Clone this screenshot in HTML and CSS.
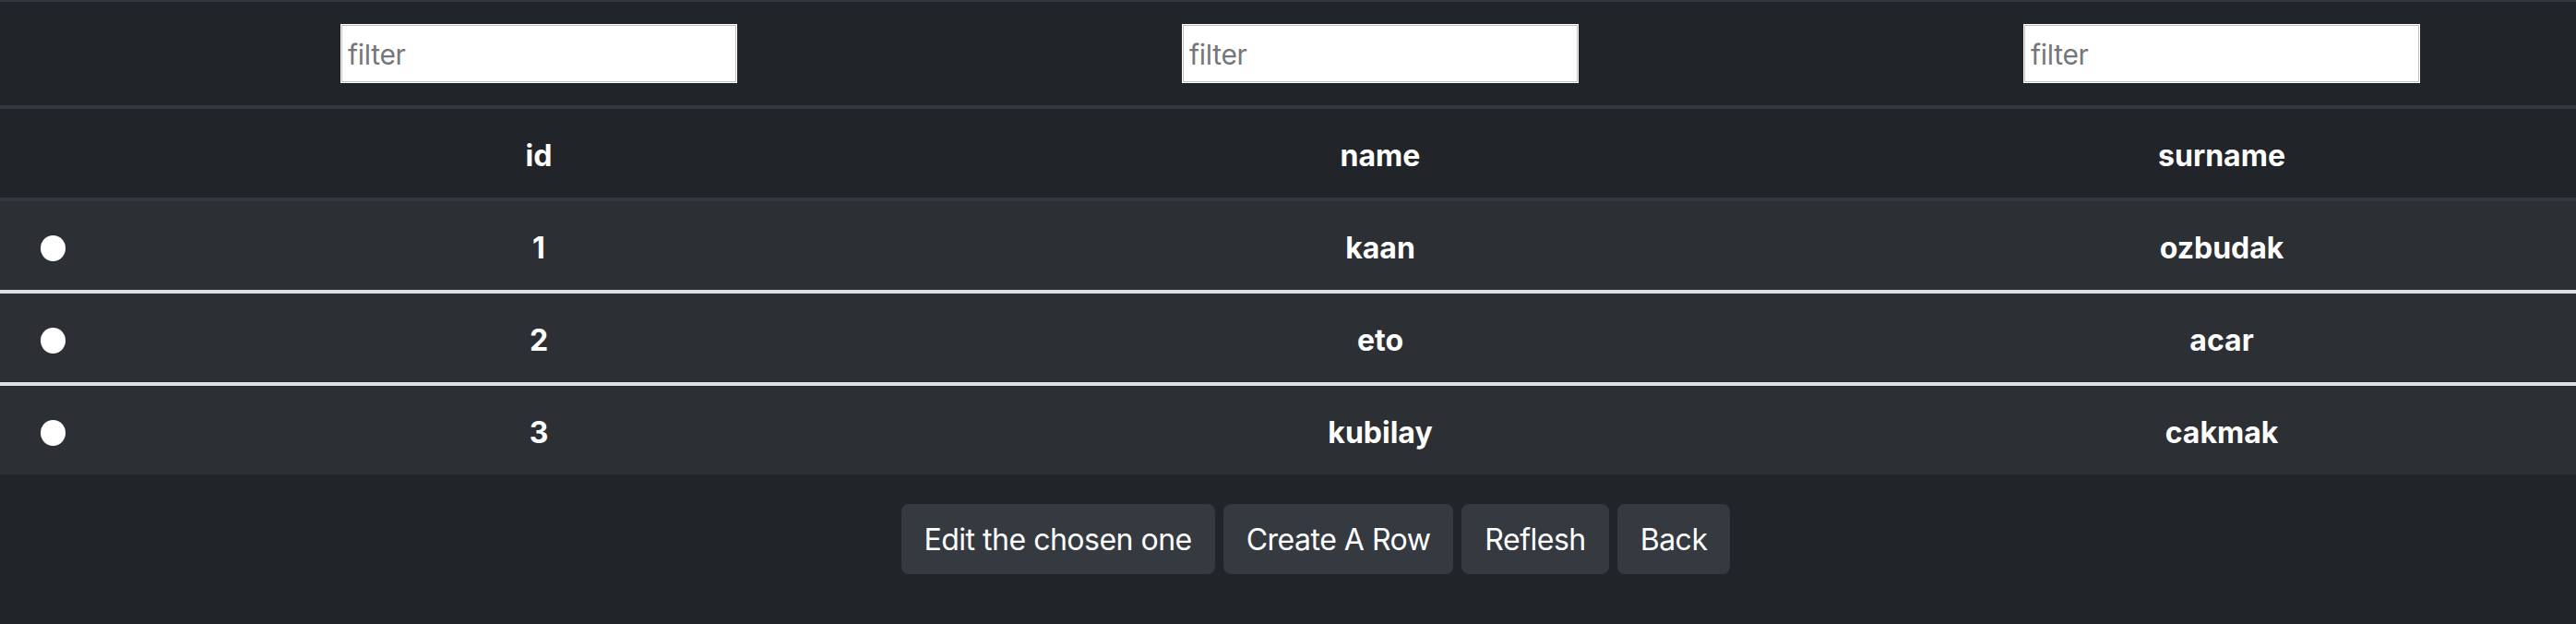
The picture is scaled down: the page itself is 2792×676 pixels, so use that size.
FILE: index.html
```html
<!DOCTYPE html>
<html lang="en">
<head>
<meta charset="utf-8">
<title>Table</title>
<link rel="stylesheet" href="styles.css">
</head>
<body>
<div class="page">
  <table class="grid">
    <colgroup>
      <col class="c-pick">
      <col class="c-data">
      <col class="c-data">
      <col class="c-data">
    </colgroup>
    <thead>
      <tr class="filters">
        <th></th>
        <th><input class="filter" type="text" placeholder="filter"></th>
        <th><input class="filter" type="text" placeholder="filter"></th>
        <th><input class="filter" type="text" placeholder="filter"></th>
      </tr>
      <tr class="heads">
        <th></th>
        <th>id</th>
        <th>name</th>
        <th>surname</th>
      </tr>
    </thead>
    <tbody>
      <tr>
        <td class="pick"><input class="radio" type="radio" name="row"></td>
        <td>1</td>
        <td>kaan</td>
        <td>ozbudak</td>
      </tr>
      <tr>
        <td class="pick"><input class="radio" type="radio" name="row"></td>
        <td>2</td>
        <td>eto</td>
        <td>acar</td>
      </tr>
      <tr>
        <td class="pick"><input class="radio" type="radio" name="row"></td>
        <td>3</td>
        <td>kubilay</td>
        <td>cakmak</td>
      </tr>
    </tbody>
  </table>
  <div class="actions">
    <button class="btn">Edit the chosen one</button>
    <button class="btn">Create A Row</button>
    <button class="btn">Reflesh</button>
    <button class="btn">Back</button>
  </div>
</div>
</body>
</html>
```
FILE: styles.css
```css
html, body {
  margin: 0;
  padding: 0;
  overflow: hidden;
  background: #212529;
}

body {
  font-family: "Inter", "Noto Sans", "Liberation Sans", sans-serif;
  font-size: 32px;
  line-height: 48px;
  color: #ffffff;
}

.page {
  width: 2864px;
  height: 676px;
  background: #212529;
}

.grid {
  width: 2864px;
  table-layout: fixed;
  border-collapse: separate;
  border-spacing: 0;
  background: #212529;
}

.c-pick { width: 128px; }
.c-data { width: 912px; }

.grid th,
.grid td {
  padding: 27px 24px 21px;
  text-align: center;
  vertical-align: middle;
  font-weight: 700;
  line-height: 48px;
}

.filters th {
  padding: 24px;
  border-top: 2px solid #32383e;
  border-bottom: 4px solid #32383e;
}

.heads th {
  border-bottom: 4px solid #32383e;
  background: #212529;
}

.grid tbody td {
  background: #2c3034;
}

.grid tbody tr + tr td {
  border-top: 4px solid #dee2e6;
}

.grid td.pick {
  padding: 0 0 0 44px;
  text-align: left;
}

.radio {
  -webkit-appearance: none;
  appearance: none;
  display: block;
  width: 27px;
  height: 28px;
  margin: 6px 0 0 0;
  border: none;
  border-radius: 50%;
  background: #ffffff;
}

.filter {
  display: block;
  box-sizing: border-box;
  width: 430px;
  height: 64px;
  margin: 0 auto;
  padding: 2px 7px 0;
  border: 1px solid #ffffff;
  box-shadow: inset 0 0 0 1px #c2c2c2;
  border-radius: 0;
  background: #ffffff;
  font-family: "Inter", "Noto Sans", sans-serif;
  font-size: 30px;
  font-weight: 400;
  letter-spacing: -0.3px;
  color: #222;
  outline: none;
}

.filter::placeholder {
  color: #767676;
}

.actions {
  margin-top: 32px;
  padding-right: 12px;
  text-align: center;
}

.btn {
  display: inline-block;
  box-sizing: border-box;
  height: 76px;
  padding: 13px 23px 11px;
  border: 2px solid #343a40;
  border-radius: 8px;
  background: #343a40;
  color: #ffffff;
  font-family: "Inter", "Noto Sans", sans-serif;
  font-size: 32px;
  font-weight: 400;
  line-height: 48px;
  letter-spacing: -0.5px;
  cursor: pointer;
}
```
